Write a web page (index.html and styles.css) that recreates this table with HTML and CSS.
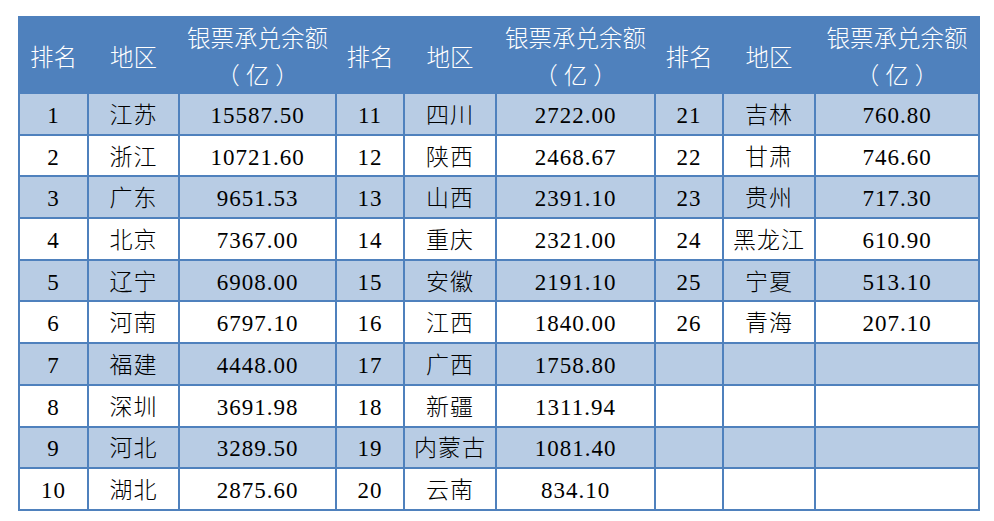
FILE: index.html
```html
<!DOCTYPE html>
<html lang="zh-CN">
<head>
<meta charset="utf-8">
<title>银票承兑余额排名</title>
<link rel="stylesheet" href="styles.css">
</head>
<body>
<div class="sheet">
  <div class="h">排名</div><div class="h">地区</div><div class="h two">银票承兑余额<br><span class="u">（亿）</span></div>
  <div class="h">排名</div><div class="h">地区</div><div class="h two">银票承兑余额<br><span class="u">（亿）</span></div>
  <div class="h">排名</div><div class="h">地区</div><div class="h two">银票承兑余额<br><span class="u">（亿）</span></div>

  <div class="c a">1</div><div class="c a">江苏</div><div class="c a">15587.50</div>
  <div class="c a">11</div><div class="c a">四川</div><div class="c a">2722.00</div>
  <div class="c a">21</div><div class="c a">吉林</div><div class="c a">760.80</div>

  <div class="c">2</div><div class="c">浙江</div><div class="c">10721.60</div>
  <div class="c">12</div><div class="c">陕西</div><div class="c">2468.67</div>
  <div class="c">22</div><div class="c">甘肃</div><div class="c">746.60</div>

  <div class="c a">3</div><div class="c a">广东</div><div class="c a">9651.53</div>
  <div class="c a">13</div><div class="c a">山西</div><div class="c a">2391.10</div>
  <div class="c a">23</div><div class="c a">贵州</div><div class="c a">717.30</div>

  <div class="c">4</div><div class="c">北京</div><div class="c">7367.00</div>
  <div class="c">14</div><div class="c">重庆</div><div class="c">2321.00</div>
  <div class="c">24</div><div class="c">黑龙江</div><div class="c">610.90</div>

  <div class="c a">5</div><div class="c a">辽宁</div><div class="c a">6908.00</div>
  <div class="c a">15</div><div class="c a">安徽</div><div class="c a">2191.10</div>
  <div class="c a">25</div><div class="c a">宁夏</div><div class="c a">513.10</div>

  <div class="c">6</div><div class="c">河南</div><div class="c">6797.10</div>
  <div class="c">16</div><div class="c">江西</div><div class="c">1840.00</div>
  <div class="c">26</div><div class="c">青海</div><div class="c">207.10</div>

  <div class="c a">7</div><div class="c a">福建</div><div class="c a">4448.00</div>
  <div class="c a">17</div><div class="c a">广西</div><div class="c a">1758.80</div>
  <div class="c a"></div><div class="c a"></div><div class="c a"></div>

  <div class="c">8</div><div class="c">深圳</div><div class="c">3691.98</div>
  <div class="c">18</div><div class="c">新疆</div><div class="c">1311.94</div>
  <div class="c"></div><div class="c"></div><div class="c"></div>

  <div class="c a">9</div><div class="c a">河北</div><div class="c a">3289.50</div>
  <div class="c a">19</div><div class="c a">内蒙古</div><div class="c a">1081.40</div>
  <div class="c a"></div><div class="c a"></div><div class="c a"></div>

  <div class="c">10</div><div class="c">湖北</div><div class="c">2875.60</div>
  <div class="c">20</div><div class="c">云南</div><div class="c">834.10</div>
  <div class="c"></div><div class="c"></div><div class="c"></div>
</div>
</body>
</html>
```

FILE: styles.css
```css
html, body {
  margin: 0;
  padding: 0;
  background: #ffffff;
}

body {
  padding: 16px 0 0 18px;
  font-family: "Liberation Serif", "Noto Serif CJK SC", "Noto Sans CJK SC", serif;
  font-size: 23px;
}

.sheet {
  display: grid;
  width: 962px;
  box-sizing: border-box;
  padding: 2px;
  gap: 2px;
  background: #4f81bd;
  grid-template-columns: 67px 89px 155px 66px 90px 157px 66px 90px 162px;
  grid-template-rows: 74px repeat(10, 39.7px);
}

.h {
  background: #4f81bd;
  color: #ffffff;
  display: flex;
  align-items: center;
  justify-content: center;
  text-align: center;
  font-family: "Noto Sans CJK SC", sans-serif;
  font-weight: 300;
  font-size: 23.5px;
  line-height: 37px;
  padding-top: 2px;
}

.h.two {
  display: block;
  padding-top: 1px;
  white-space: nowrap;
}

.h .u {
  letter-spacing: 6px;
  padding-left: 6px;
}

.c {
  background: #ffffff;
  color: #000000;
  display: flex;
  align-items: center;
  justify-content: center;
  line-height: 1;
  letter-spacing: 1px;
  padding-top: 3px;
  font-family: "Liberation Serif", "Noto Sans CJK SC", serif;
  font-weight: 300;
}

.c.a {
  background: #b8cce4;
}
```
